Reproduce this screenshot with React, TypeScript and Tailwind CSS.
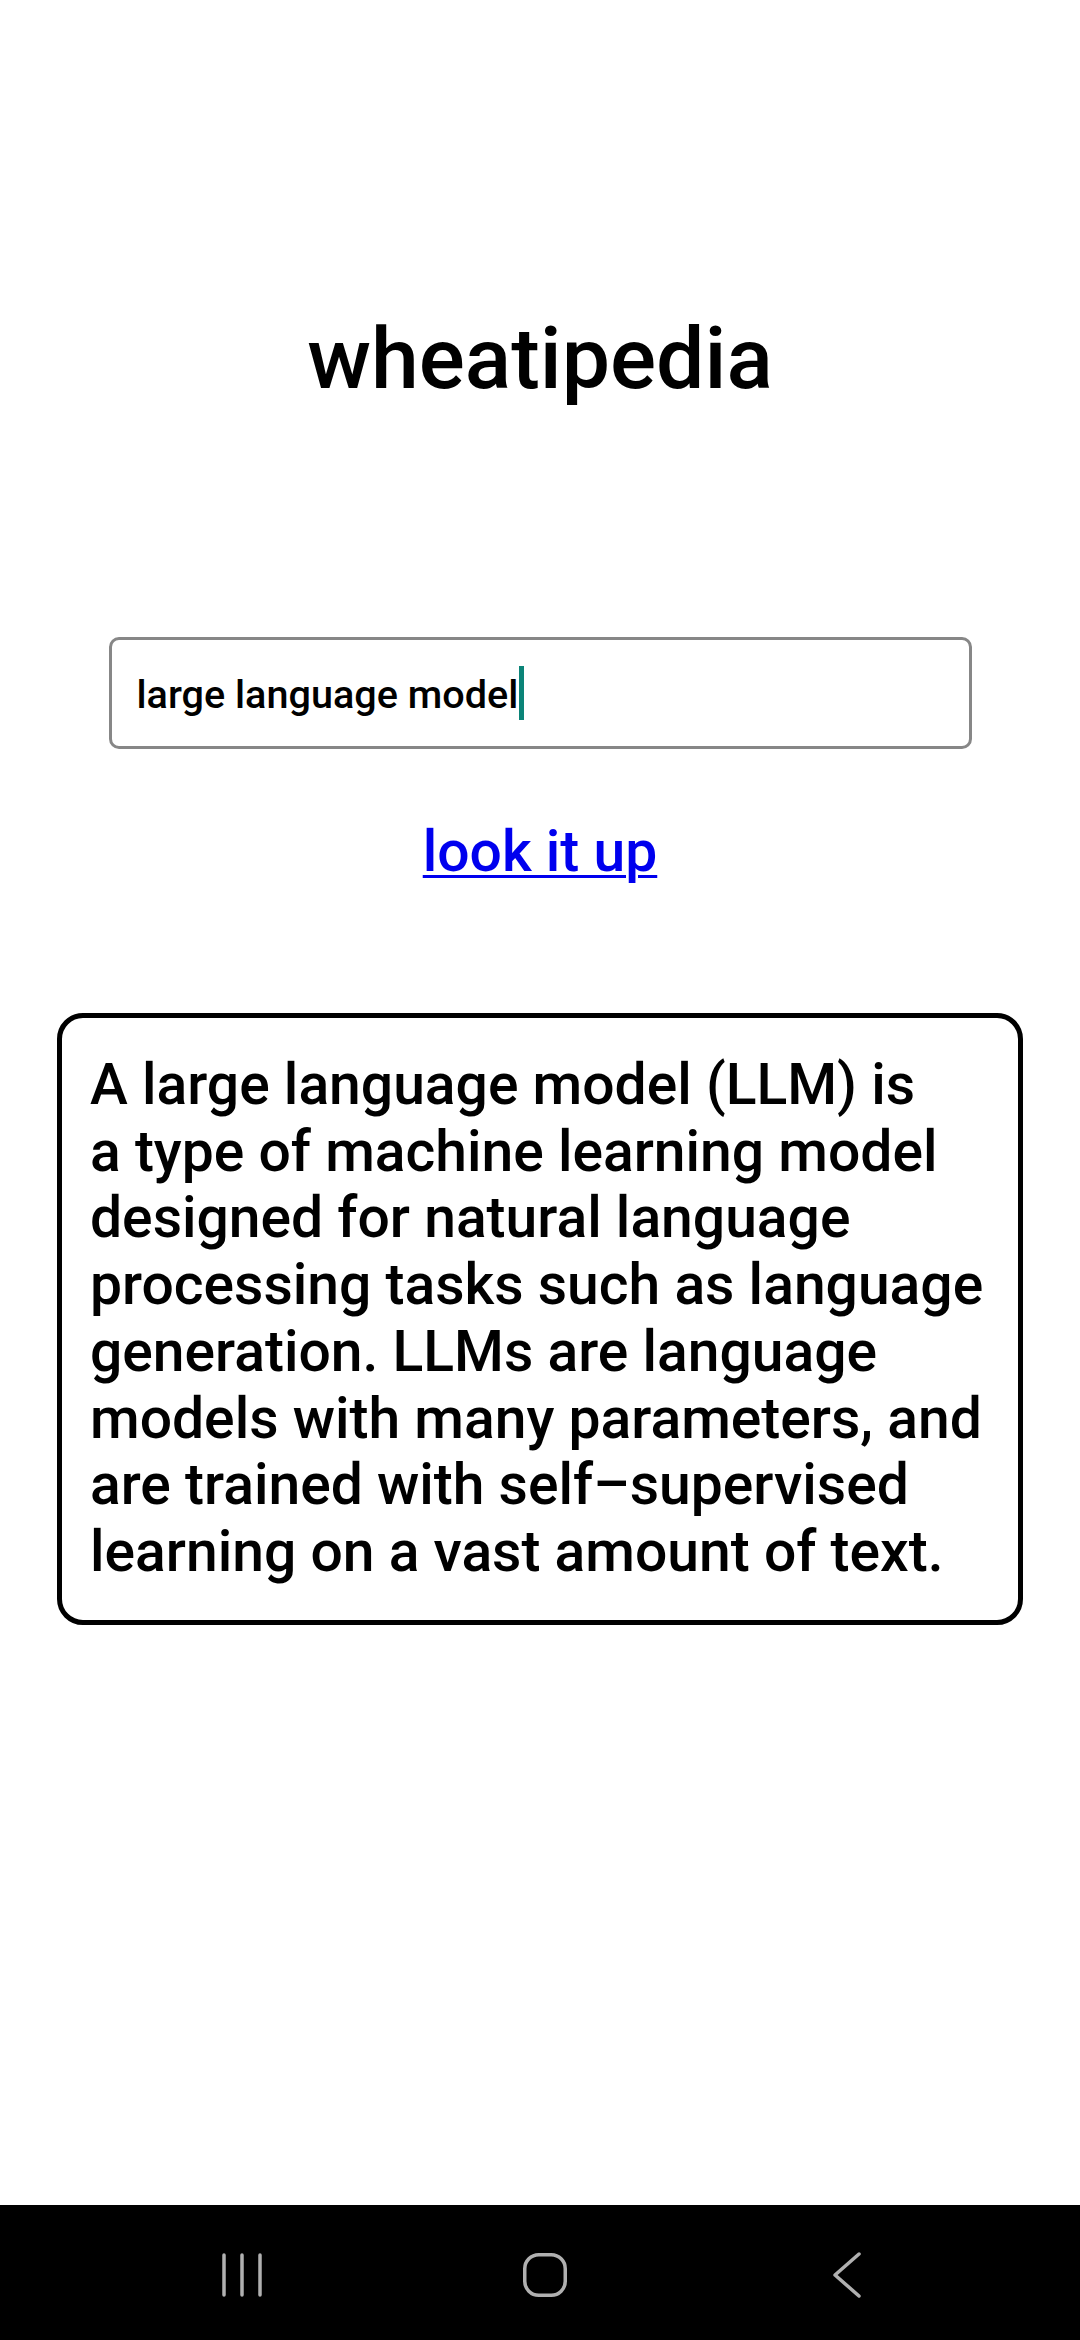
export default function App() {
  const lines = [
    "A large language model (LLM) is",
    "a type of machine learning model",
    "designed for natural language",
    "processing tasks such as language",
    "generation. LLMs are language",
    "models with many parameters, and",
    "are trained with self\u2013supervised",
    "learning on a vast amount of text.",
  ];
  return (
    <div className="min-h-[2340px] flex flex-col bg-white text-black font-['Roboto',sans-serif]">
      <main className="flex-1 flex flex-col items-center pt-[309px]">
        <h1 className="text-[86px] leading-[100px] font-medium">wheatipedia</h1>
        <div className="mt-[228px] w-[863px] h-[112px] border-[3px] border-[#878787] rounded-[10px] flex items-center pl-[25px] pt-[4px]">
          <span className="text-[39.6px] leading-none font-medium">large language model</span>
          <span className="ml-[1px] w-[5px] h-[54px] bg-[#0b8478] -mt-[4px]" />
        </div>
        <a
          href="#"
          className="mt-[69px] text-[57px] leading-[67px] font-medium text-[#0000ee] underline decoration-[3px] underline-offset-[4px]"
        >
          look it up
        </a>
        <div className="mt-[128px] w-[966px] border-[5px] border-black rounded-[26px] px-[28px] py-[34px] text-[57px] leading-[66.7px] font-medium">
          {lines.map((l) => (
            <div key={l} className="whitespace-nowrap">
              {l}
            </div>
          ))}
        </div>
      </main>
      <nav className="h-[135px] bg-black flex items-center justify-center gap-[202.5px] pl-[9px] pt-[5px]">
        <div className="w-[100px] flex justify-center">
          <svg width="44" height="44" viewBox="0 0 44 44" fill="none" stroke="#b0b0b0" strokeWidth="3.5" strokeLinecap="round">
            <line x1="4" y1="2" x2="4" y2="42" />
            <line x1="22" y1="2" x2="22" y2="42" />
            <line x1="40" y1="2" x2="40" y2="42" />
          </svg>
        </div>
        <div className="w-[100px] flex justify-center">
          <svg width="44" height="44" viewBox="0 0 44 44" fill="none" stroke="#b0b0b0" strokeWidth="3.5">
            <rect x="1.75" y="1.75" width="40.5" height="40.5" rx="14" />
          </svg>
        </div>
        <div className="w-[100px] flex justify-center">
          <svg width="44" height="46" viewBox="0 0 44 46" fill="none" stroke="#b0b0b0" strokeWidth="3.5" strokeLinecap="round" strokeLinejoin="round">
            <polyline points="34,2 10,23 34,44" />
          </svg>
        </div>
      </nav>
    </div>
  );
}
